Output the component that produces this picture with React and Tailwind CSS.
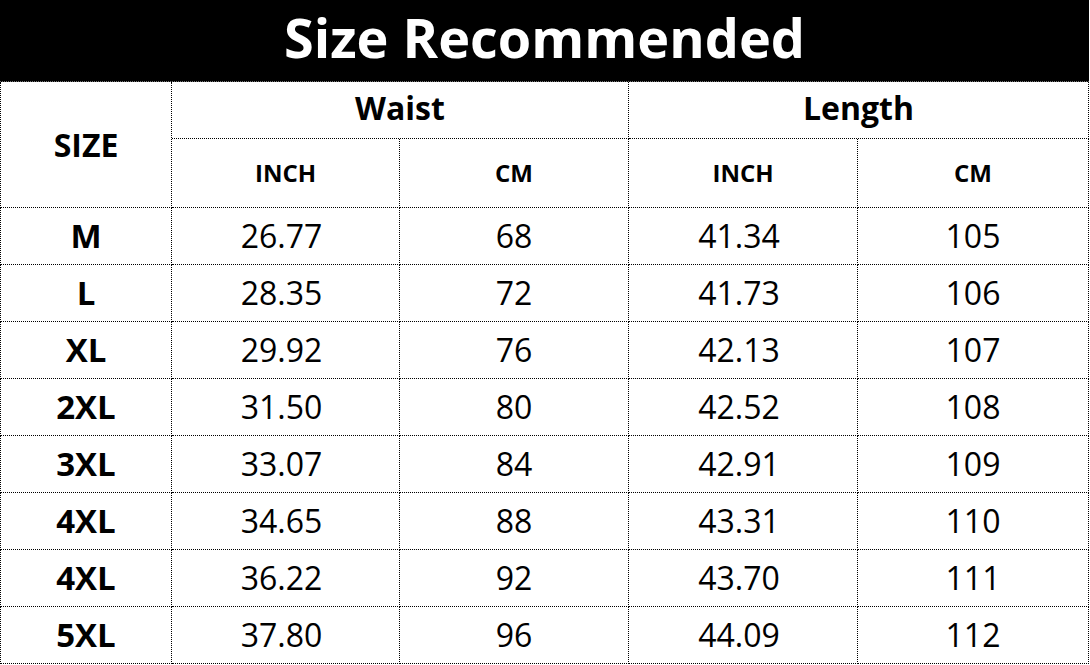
const rows = [
  ["M", "26.77", "68", "41.34", "105"],
  ["L", "28.35", "72", "41.73", "106"],
  ["XL", "29.92", "76", "42.13", "107"],
  ["2XL", "31.50", "80", "42.52", "108"],
  ["3XL", "33.07", "84", "42.91", "109"],
  ["4XL", "34.65", "88", "43.31", "110"],
  ["4XL", "36.22", "92", "43.70", "111"],
  ["5XL", "37.80", "96", "44.09", "112"],
];

const cell = "flex items-center justify-center border-r border-b border-dotted border-black";

export default function App() {
  return (
    <div className="bg-white w-[1090px] h-[665px] text-black" style={{ fontFamily: '"Open Sans", "Noto Sans", sans-serif' }}>
      <div className="grid grid-cols-[172px_228px_229px_229px_231px] grid-rows-[82px_57px_69px_repeat(8,57px)]">
        <div className="col-span-5 flex items-center justify-center bg-black border-b border-dotted border-neutral-500">
          <h1 className="text-white font-bold text-[54px] leading-none pb-2">Size Recommended</h1>
        </div>

        <div className={`${cell} row-span-2 border-l font-bold text-[32px]`}>SIZE</div>
        <div className={`${cell} col-span-2 font-bold text-[32px] pb-1`}>Waist</div>
        <div className={`${cell} col-span-2 font-bold text-[32px] pb-1`}>Length</div>
        <div className={`${cell} font-bold text-[24px]`}>INCH</div>
        <div className={`${cell} font-bold text-[24px]`}>CM</div>
        <div className={`${cell} font-bold text-[24px]`}>INCH</div>
        <div className={`${cell} font-bold text-[24px]`}>CM</div>

        {rows.map((r, i) => (
          <div key={i} className="contents">
            <div className={`${cell} border-l font-bold text-[33px]`}>{r[0]}</div>
            <div className={`${cell} text-[32px] pr-2`}>{r[1]}</div>
            <div className={`${cell} text-[32px]`}>{r[2]}</div>
            <div className={`${cell} text-[32px] pr-2`}>{r[3]}</div>
            <div className={`${cell} text-[32px]`}>{r[4]}</div>
          </div>
        ))}
      </div>
    </div>
  );
}
